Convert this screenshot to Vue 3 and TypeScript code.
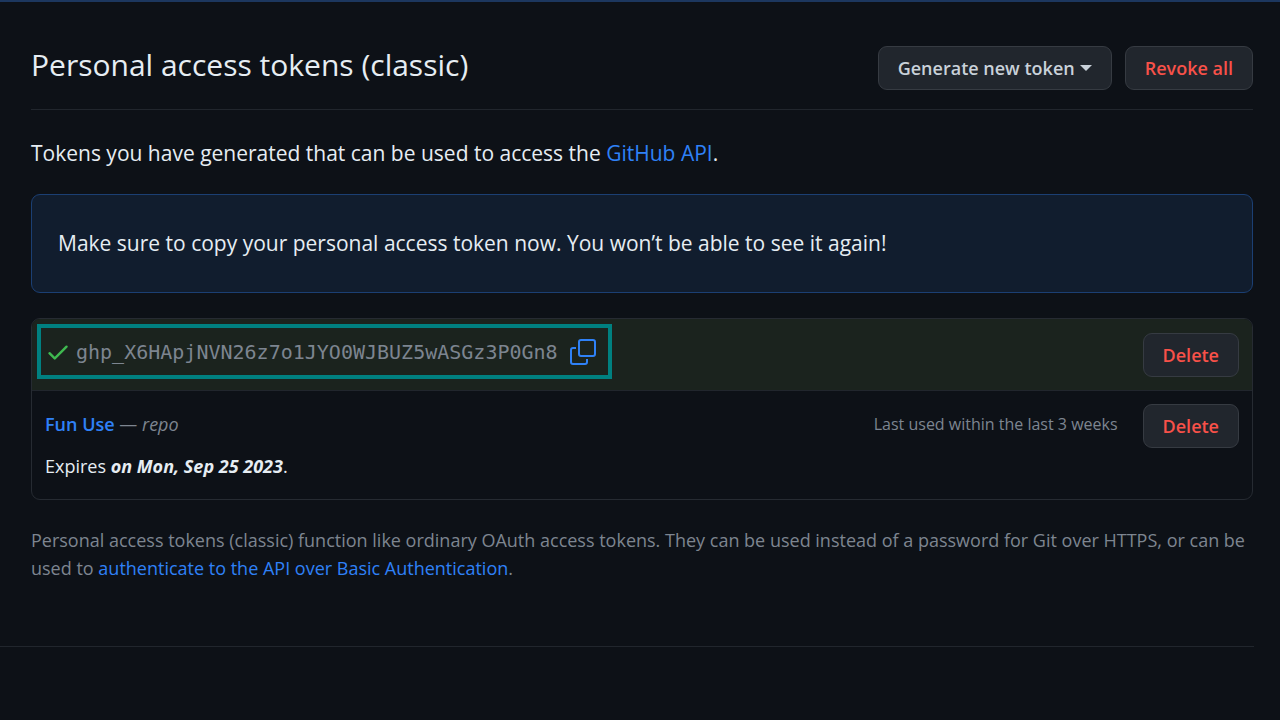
<script setup lang="ts">
interface Token {
  name: string
  scope: string
  lastUsed: string
  expires: string
}

const newToken = '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'

const tokens: Token[] = [
  {
    name: 'Fun Use',
    scope: 'repo',
    lastUsed: 'Last used within the last 3 weeks',
    expires: 'on Mon, Sep 25 2023',
  },
]
</script>

<template>
  <div class="page">
    <main class="content">
      <header class="heading">
        <h1>Personal access tokens (classic)</h1>
        <div class="actions">
          <button type="button" class="btn">Generate new token<span class="caret"></span></button>
          <button type="button" class="btn danger">Revoke all</button>
        </div>
      </header>

      <p class="intro">
        Tokens you have generated that can be used to access the <a href="#">GitHub API</a>.
      </p>

      <div class="flash">
        Make sure to copy your personal access token now. You won’t be able to see it again!
      </div>

      <ul class="tokens">
        <li class="row created">
          <div class="highlight">
            <svg class="check" viewBox="0 0 16 16" aria-hidden="true">
              <path
                d="M13.78 4.22a.75.75 0 0 1 0 1.06l-7.25 7.25a.75.75 0 0 1-1.06 0L2.22 9.28a.751.751 0 0 1 .018-1.042.751.751 0 0 1 1.042-.018L6 10.94l6.72-6.72a.75.75 0 0 1 1.06 0Z"
              />
            </svg>
            <code>{{ newToken }}</code>
            <button type="button" class="copy" aria-label="Copy token">
              <svg viewBox="0 0 26 26" aria-hidden="true">
                <rect x="9" y="1" width="16" height="16" rx="2" />
                <path d="M6 9H3a2 2 0 0 0-2 2v12a2 2 0 0 0 2 2h12a2 2 0 0 0 2-2v-3" />
              </svg>
            </button>
          </div>
          <button type="button" class="btn danger">Delete</button>
        </li>
        <li v-for="token in tokens" :key="token.name" class="row">
          <div class="details">
            <p><a href="#" class="name">{{ token.name }}</a> <span class="scope">— <em>{{ token.scope }}</em></span></p>
            <p>Expires <em class="date">{{ token.expires }}</em>.</p>
          </div>
          <span class="used">{{ token.lastUsed }}</span>
          <button type="button" class="btn danger">Delete</button>
        </li>
      </ul>

      <p class="note">
        Personal access tokens (classic) function like ordinary OAuth access tokens. They can be
        used instead of a password for Git over HTTPS, or can be used to
        <a href="#">authenticate to the API over Basic Authentication</a>.
      </p>
    </main>
    <hr class="rule" />
  </div>
</template>

<style>
html,
body {
  margin: 0;
  background: #0d1117;
}
</style>

<style scoped>
.page {
  box-sizing: border-box;
  min-height: 100vh;
  border-top: 2px solid #1c375f;
  background: #0d1117;
  color: #e6edf3;
  font-family: 'Open Sans', 'Noto Sans', sans-serif;
  font-size: 18px;
}

.content {
  padding: 44px 27px 0 31px;
}

h1,
p,
ul {
  margin: 0;
  padding: 0;
}

a {
  color: #2f81f7;
  text-decoration: none;
}

.heading {
  display: flex;
  justify-content: space-between;
  align-items: flex-start;
  padding-bottom: 19px;
  border-bottom: 1px solid #21262d;
}

h1 {
  font-size: 30px;
  font-weight: 400;
  line-height: 38px;
}

.actions {
  display: flex;
  gap: 13px;
}

.btn {
  display: flex;
  align-items: center;
  flex: none;
  box-sizing: border-box;
  height: 44px;
  padding: 0 19px;
  border: 1px solid #363b42;
  border-radius: 9px;
  background: #21262d;
  color: #c9d1d9;
  font: inherit;
  font-weight: 600;
  cursor: pointer;
}

.btn.danger {
  color: #f85149;
}

.caret {
  margin-left: 5px;
  border: 6px solid transparent;
  border-top-color: currentColor;
  border-bottom: 0;
}

.intro {
  margin-top: 27px;
  font-size: 21px;
  line-height: 32px;
}

.flash {
  margin-top: 25px;
  padding: 33px 26px;
  border: 1px solid #1b3f73;
  border-radius: 9px;
  background: #111d2e;
  font-size: 21px;
  line-height: 31px;
}

.tokens {
  margin-top: 25px;
  overflow: hidden;
  list-style: none;
  border: 1px solid #262b32;
  border-radius: 9px;
}

.row {
  display: flex;
  align-items: flex-start;
  padding: 13px;
}

.row + .row {
  border-top: 1px solid #21262d;
}

.created {
  justify-content: space-between;
  padding: 5px 13px 11px 5px;
  background: #1b231e;
}

.created .btn {
  margin-top: 9px;
}

.highlight {
  display: flex;
  align-items: center;
  box-sizing: border-box;
  height: 55px;
  padding: 0 12px 0 4px;
  border: 4px solid #008080;
}

.check {
  width: 26px;
  height: 26px;
  margin-right: 5px;
  fill: #3fb950;
}

code {
  color: #7d8590;
  font-family: 'DejaVu Sans Mono', monospace;
  font-size: 20px;
}

.copy {
  display: flex;
  margin-left: 12px;
  padding: 0;
  border: 0;
  background: none;
  cursor: pointer;
}

.copy svg {
  width: 26px;
  height: 26px;
  fill: none;
  stroke: #2f81f7;
  stroke-width: 2;
}

.details {
  flex: 1;
  display: flex;
  flex-direction: column;
  gap: 14px;
  padding: 6px 0;
  line-height: 28px;
}

.name {
  font-weight: 600;
}

.scope,
.used,
.note {
  color: #7d8590;
}

.date {
  font-weight: 700;
}

.used {
  margin: 6px 25px 0 0;
  font-size: 16px;
  line-height: 28px;
}

.note {
  margin-top: 26px;
  line-height: 28px;
}

.rule {
  height: 1px;
  margin: 64px 26px 0 0;
  border: 0;
  background: #21262d;
}
</style>
